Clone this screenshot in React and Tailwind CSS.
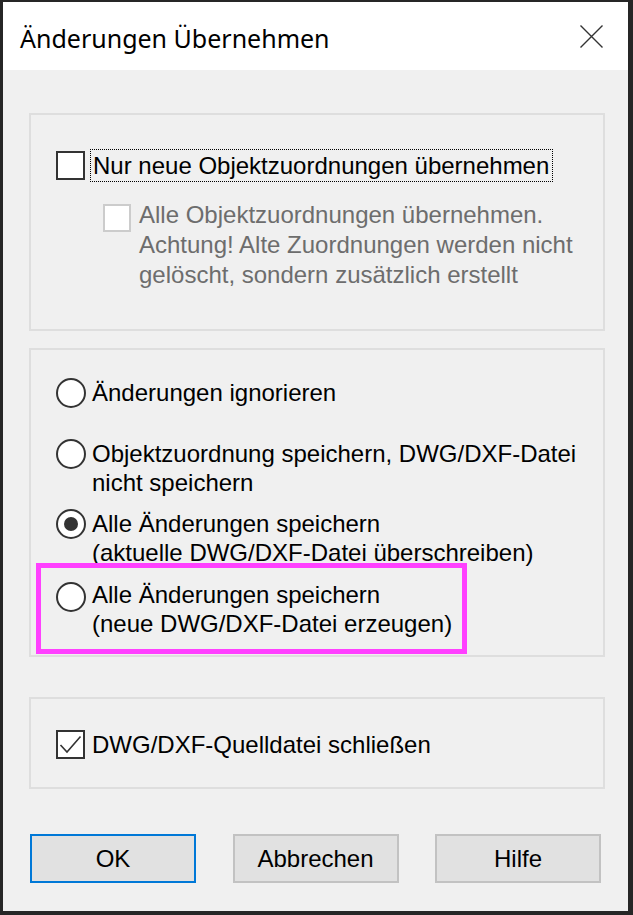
import React from "react";

function CheckBox({ checked = false, disabled = false, size = 29 }) {
  return (
    <div
      className={
        "shrink-0 bg-white border-2 flex items-center justify-center " +
        (disabled ? "border-[#cccccc]" : "border-[#333333]")
      }
      style={{ width: size, height: size }}
    >
      {checked && (
        <svg width="25" height="25" viewBox="0 0 25 25">
          <path d="M2.5 13 L9 20 L22.5 4.5" fill="none" stroke="#333" strokeWidth="1.6" />
        </svg>
      )}
    </div>
  );
}

function Radio({ checked = false }) {
  return (
    <div className="shrink-0 w-[30px] h-[30px] rounded-full bg-white border-2 border-[#333333] flex items-center justify-center">
      {checked && <div className="w-[14px] h-[14px] rounded-full bg-[#333333]" />}
    </div>
  );
}

function RadioRow({ checked, lines, className = "", circleClass = "" }) {
  return (
    <div className={"flex items-start " + className}>
      <div className={circleClass}>
        <Radio checked={checked} />
      </div>
      <div className="ml-[6px] leading-[29px] text-[24px] text-black">
        {lines.map((l, i) => (
          <div key={i} className="whitespace-nowrap">{l}</div>
        ))}
      </div>
    </div>
  );
}

export default function App() {
  return (
    <div className="w-[633px] h-[915px] border-t-2 border-l-[3px] border-r-[5px] border-b-4 border-[#262626] bg-[#f0f0f0] flex flex-col overflow-hidden font-['Liberation_Sans',Arial,sans-serif]">
      {/* Title bar */}
      <div className="h-[68px] shrink-0 bg-white flex items-center justify-between pl-[17px] pr-[25px]">
        <div className="pt-[6px] text-[25px] text-black font-['Noto_Sans',sans-serif] whitespace-nowrap">
          Änderungen Übernehmen
        </div>
        <svg width="23" height="23" viewBox="0 0 23 23" className="mt-[1px]">
          <path d="M0.5 0.5 L22.5 22.5 M22.5 0.5 L0.5 22.5" stroke="#333" strokeWidth="1.4" fill="none" />
        </svg>
      </div>

      {/* Body */}
      <div className="flex-1 pl-[26px] pr-[23px] pt-[43px]">
        {/* Group 1 */}
        <div className="h-[218px] border-2 border-[#dedede] pl-[25px] pt-[34px]">
          <div className="flex items-center">
            <CheckBox />
            <div className="ml-[5px] h-[33px] pl-[2px] pr-[3px] border border-dotted border-black flex items-center text-[24px] text-black whitespace-nowrap">
              Nur neue Objektzuordnungen übernehmen
            </div>
          </div>
          <div className="flex items-start ml-[47px] mt-[18px]">
            <div className="mt-[4px]">
              <CheckBox disabled size={28} />
            </div>
            <div className="ml-[8px] text-[24px] leading-[30px] text-[#6d6d6d] whitespace-nowrap">
              <div>Alle Objektzuordnungen übernehmen.</div>
              <div>Achtung! Alte Zuordnungen werden nicht</div>
              <div>gelöscht, sondern zusätzlich erstellt</div>
            </div>
          </div>
        </div>

        {/* Group 2 */}
        <div className="relative mt-[17px] h-[309px] border-2 border-[#dedede] pl-[25px] pt-[28px]">
          <RadioRow lines={["Änderungen ignorieren"]} />
          <RadioRow
            className="mt-[31px]"
            lines={["Objektzuordnung speichern, DWG/DXF-Datei", "nicht speichern"]}
          />
          <RadioRow
            className="mt-[12px]"
            checked
            lines={["Alle Änderungen speichern", "(aktuelle DWG/DXF-Datei überschreiben)"]}
          />
          <RadioRow
            className="mt-[13px]"
            circleClass="mt-[2px]"
            lines={["Alle Änderungen speichern", "(neue DWG/DXF-Datei erzeugen)"]}
          />
          <div className="absolute left-[5px] top-[213px] w-[431px] h-[91px] border-[5px] border-[#ff40ff]" />
        </div>

        {/* Group 3 */}
        <div className="mt-[40px] h-[92px] border-2 border-[#dedede] pl-[25px] pt-[3px] flex items-center">
          <CheckBox checked />
          <div className="ml-[7px] text-[24px] text-black whitespace-nowrap">DWG/DXF-Quelldatei schließen</div>
        </div>

        {/* Buttons */}
        <div className="mt-[45px] pl-[1px] flex gap-[36.5px]">
          <button className="w-[166px] h-[49px] bg-[#e1e1e1] border-2 border-[#0078d7] text-[24px] text-black">
            OK
          </button>
          <button className="w-[166px] h-[49px] bg-[#e1e1e1] border-2 border-[#c2c2c2] text-[24px] text-black">
            Abbrechen
          </button>
          <button className="w-[166px] h-[49px] bg-[#e1e1e1] border-2 border-[#c2c2c2] text-[24px] text-black">
            Hilfe
          </button>
        </div>
      </div>
    </div>
  );
}
